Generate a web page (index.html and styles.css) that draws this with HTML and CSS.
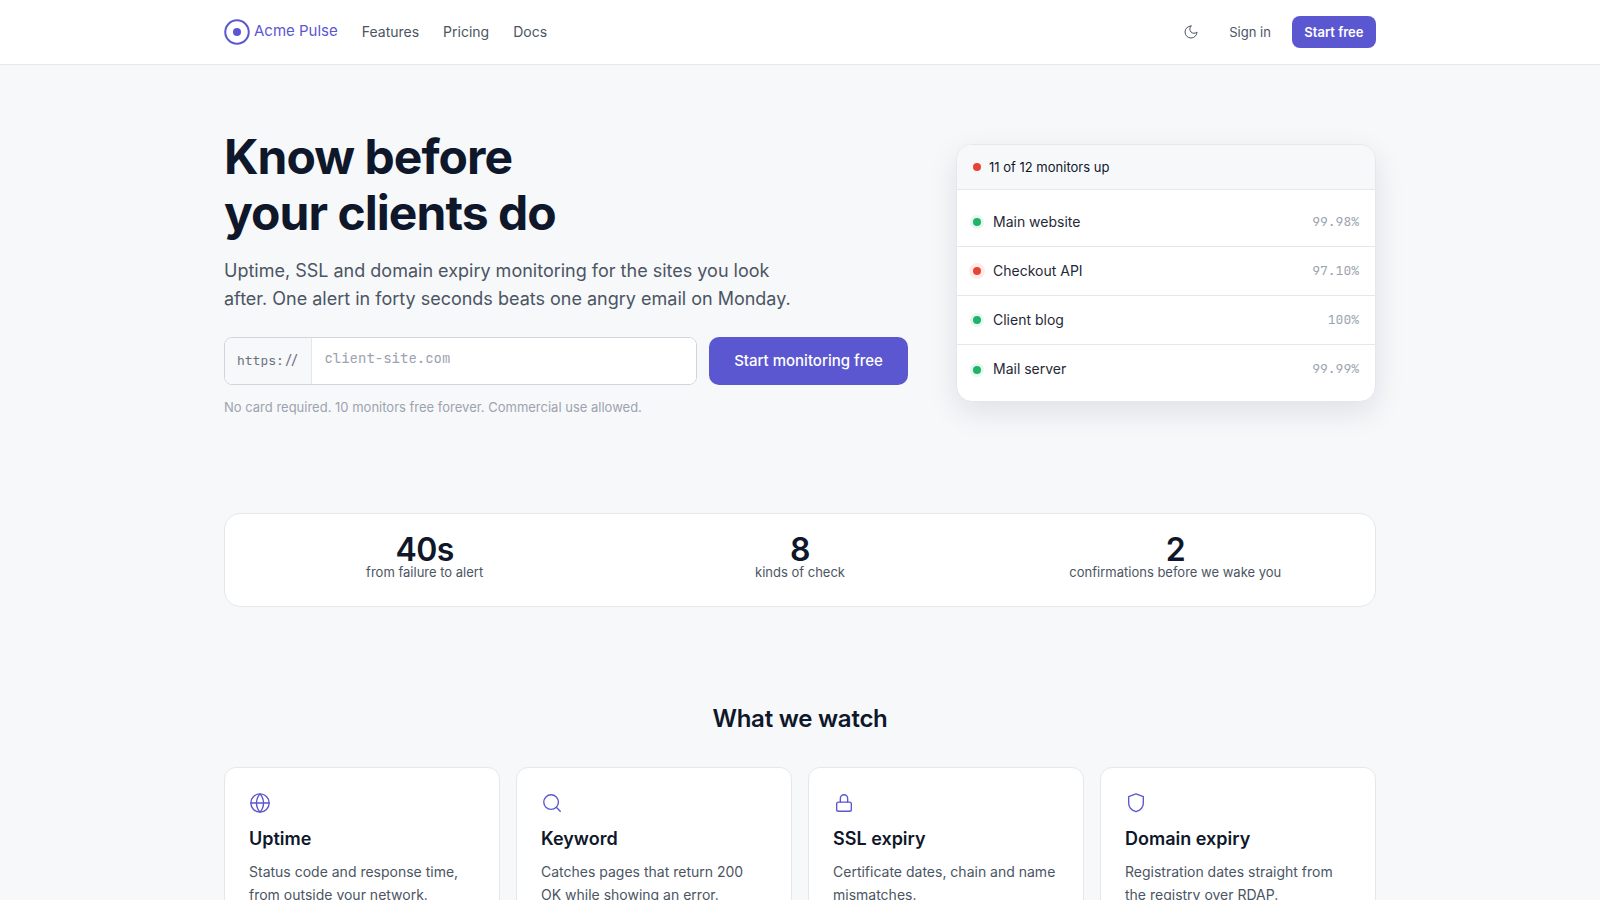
FILE: index.html
```html
<!DOCTYPE html>
<html>
<head>
<meta name="viewport" content="width=device-width, initial-scale=1">
<title>Acme Pulse</title>
<link rel="stylesheet" href="styles.css">
</head>
<body>

<div class="header">
  <div class="wrap navbar">
    <a class="brand" href="#">
      <svg class="logo" width="26" height="26" viewBox="0 0 26 26"><circle cx="13" cy="13" r="11.75" fill="none" stroke="currentColor" stroke-width="2"/><circle cx="13" cy="13" r="4" fill="currentColor"/></svg>
      <span>Acme Pulse</span>
    </a>
    <a class="nav-link" href="#">Features</a>
    <a class="nav-link" href="#">Pricing</a>
    <a class="nav-link" href="#">Docs</a>
    <div class="nav-right">
      <svg class="moon" width="16" height="16" viewBox="0 0 24 24" fill="none" stroke="currentColor" stroke-width="1.5" stroke-linecap="round" stroke-linejoin="round"><path d="M12 3a6 6 0 0 0 9 9 9 9 0 1 1-9-9Z"/></svg>
      <a class="nav-link signin" href="#">Sign in</a>
      <a class="btn-small" href="#">Start free</a>
    </div>
  </div>
</div>

<div class="wrap hero">
  <div class="hero-left">
    <h1>Know before<br>your clients do</h1>
    <p class="lead">Uptime, SSL and domain expiry monitoring for the sites you look after. One alert in forty seconds beats one angry email on Monday.</p>
    <form class="signup">
      <div class="url-field">
        <span class="prefix">https://</span>
        <input type="text" placeholder="client-site.com">
      </div>
      <button type="button">Start monitoring free</button>
    </form>
    <p class="note">No card required. 10 monitors free forever. Commercial use allowed.</p>
  </div>

  <div class="status-card">
    <div class="status-head"><span class="dot red"></span>11 of 12 monitors up</div>
    <div class="status-list">
      <div class="status-row"><span class="dot green ring"></span><span class="name">Main website</span><span class="pct">99.98%</span></div>
      <div class="status-row"><span class="dot red ring"></span><span class="name">Checkout API</span><span class="pct">97.10%</span></div>
      <div class="status-row"><span class="dot green ring"></span><span class="name">Client blog</span><span class="pct">100%</span></div>
      <div class="status-row"><span class="dot green ring"></span><span class="name">Mail server</span><span class="pct">99.99%</span></div>
    </div>
  </div>
</div>

<div class="wrap">
  <div class="stats">
    <div class="stat"><b>40s</b><span>from failure to alert</span></div>
    <div class="stat"><b>8</b><span>kinds of check</span></div>
    <div class="stat"><b>2</b><span>confirmations before we wake you</span></div>
  </div>
</div>

<div class="wrap watch">
  <h2>What we watch</h2>
  <div class="cards">
    <div class="card">
      <svg class="icon" width="22" height="22" viewBox="0 0 24 24" fill="none" stroke="currentColor" stroke-width="1.5" stroke-linecap="round" stroke-linejoin="round"><circle cx="12" cy="12" r="10"/><path d="M2 12h20"/><path d="M12 2a15 15 0 0 1 0 20 15 15 0 0 1 0-20Z"/></svg>
      <h3>Uptime</h3>
      <p>Status code and response time, from outside your network.</p>
    </div>
    <div class="card">
      <svg class="icon" width="22" height="22" viewBox="0 0 24 24" fill="none" stroke="currentColor" stroke-width="1.5" stroke-linecap="round" stroke-linejoin="round"><circle cx="11" cy="11" r="8"/><path d="m21 21-4.300-4.300"/></svg>
      <h3>Keyword</h3>
      <p>Catches pages that return 200 OK while showing an error.</p>
    </div>
    <div class="card">
      <svg class="icon" width="22" height="22" viewBox="0 0 24 24" fill="none" stroke="currentColor" stroke-width="1.5" stroke-linecap="round" stroke-linejoin="round"><rect x="4" y="11" width="16" height="10" rx="2"/><path d="M8 11V7a4 4 0 0 1 8 0v4"/></svg>
      <h3>SSL expiry</h3>
      <p>Certificate dates, chain and name mismatches.</p>
    </div>
    <div class="card">
      <svg class="icon" width="22" height="22" viewBox="0 0 24 24" fill="none" stroke="currentColor" stroke-width="1.5" stroke-linecap="round" stroke-linejoin="round"><path d="M12 2 20 5v7c0 5-3.500 8-8 9.500-4.500-1.500-8-4.500-8-9.500V5Z"/></svg>
      <h3>Domain expiry</h3>
      <p>Registration dates straight from the registry over RDAP.</p>
    </div>
  </div>
</div>

</body>
</html>
```

FILE: styles.css
```css
* {
  box-sizing: border-box;
}

body {
  margin: 0;
  background: #f7f8fa;
  color: #0f172a;
  font-family: Inter, "Noto Sans", sans-serif;
}

a {
  text-decoration: none;
}

.wrap {
  width: 1152px;
  margin: 0 auto;
}

/* Navigation bar */
.header {
  background: #fff;
  border-bottom: 1px solid #e5e7eb;
}

.navbar {
  height: 64px;
  display: flex;
  align-items: center;
  gap: 24px;
}

.brand {
  display: flex;
  align-items: center;
  gap: 4px;
  color: #5b57d1;
  font-size: 15px;
}

.brand span {
  margin-top: -3px;
}

.logo {
  display: block;
}

.nav-link {
  color: #4b5563;
  font-size: 14px;
  padding-bottom: 2px;
}

.signin {
  font-size: 13px;
  padding-bottom: 0;
}

.nav-right {
  margin-left: auto;
  display: flex;
  align-items: center;
  gap: 21px;
}

.moon {
  color: #4b5563;
  margin-right: 9px;
}

.btn-small {
  background: #5b57d1;
  color: #fff;
  font-size: 13px;
  font-weight: 600;
  padding: 8px 12.500px;
  border-radius: 8px;
  line-height: 16px;
}

/* Hero */
.hero {
  display: grid;
  grid-template-columns: 684px 420px;
  gap: 48px;
  padding-top: 64px;
  height: 448px;
}

h1 {
  margin: 0;
  font-size: 48px;
  line-height: 56px;
  font-weight: 700;
  letter-spacing: -0.96px;
}

.lead {
  margin: 16px 0 0;
  width: 580px;
  font-size: 18px;
  line-height: 28px;
  color: #4b5563;
}

.signup {
  display: flex;
  gap: 12px;
  margin-top: 24px;
}

.url-field {
  flex: 1;
  display: flex;
  height: 48px;
  background: #fff;
  border: 1px solid #d1d5db;
  border-radius: 8px;
  overflow: hidden;
}

.prefix {
  display: flex;
  align-items: center;
  padding: 0 12px 2px;
  background: #f7f8fa;
  border-right: 1px solid #e5e7eb;
  color: #6b7280;
  font-family: "JetBrains Mono", "Liberation Mono", monospace;
  font-size: 13px;
}

.url-field input {
  flex: 1;
  min-width: 0;
  border: none;
  outline: none;
  padding: 0 12px 6px;
  font-family: "JetBrains Mono", "Liberation Mono", monospace;
  font-size: 14px;
}

.url-field input::placeholder {
  color: #9ca3af;
}

.signup button {
  width: 199px;
  height: 48px;
  padding: 0 0 2px;
  border: none;
  border-radius: 10px;
  background: #5b57d1;
  color: #fff;
  font-family: inherit;
  font-size: 15px;
  font-weight: 500;
}

.note {
  margin: 14px 0 0;
  font-size: 13px;
  line-height: 16px;
  color: #9ca3af;
}

/* Status card */
.status-card {
  align-self: start;
  margin-top: 15px;
  background: #fff;
  border: 1px solid #e5e7eb;
  border-radius: 16px;
  box-shadow: 0 10px 30px rgba(17, 24, 39, 0.1);
  overflow: hidden;
}

.status-head {
  display: flex;
  align-items: center;
  gap: 8px;
  height: 45px;
  padding: 0 16px;
  background: #f7f8fa;
  border-bottom: 1px solid #e5e7eb;
  font-size: 13px;
}

.status-list {
  padding: 8px 0 7px;
}

.status-row {
  display: flex;
  align-items: center;
  height: 49px;
  padding: 0 16px 2px;
  border-bottom: 1px solid #e5e7eb;
  font-size: 14px;
}

.status-row:last-child {
  border-bottom: none;
}

.status-row .dot {
  margin-top: 2px;
}

.name {
  margin-left: 12px;
  color: #1f2937;
}

.pct {
  margin-left: auto;
  font-family: "JetBrains Mono", "Liberation Mono", monospace;
  font-size: 13px;
  color: #9ca3af;
}

.dot {
  width: 8px;
  height: 8px;
  border-radius: 50%;
  flex: none;
}

.dot.red {
  background: #ea4335;
}

.dot.green {
  background: #1fb26b;
}

.dot.ring.green {
  box-shadow: 0 0 0 3px #e6f7ef;
}

.dot.ring.red {
  box-shadow: 0 0 0 4px #fdecea;
}

/* Stats strip */
.stats {
  display: grid;
  grid-template-columns: repeat(3, 1fr);
  gap: 24px;
  height: 94px;
  padding: 22px 24px 0;
  background: #fff;
  border: 1px solid #e5e7eb;
  border-radius: 16px;
}

.stat {
  display: flex;
  flex-direction: column;
  align-items: center;
}

.stat b {
  font-size: 32px;
  line-height: 28px;
  font-weight: 600;
  letter-spacing: -0.64px;
}

.stat span {
  font-size: 13px;
  line-height: 16px;
  color: #4b5563;
}

/* What we watch */
.watch {
  padding-top: 96px;
}

h2 {
  margin: 0;
  text-align: center;
  font-size: 24px;
  line-height: 32px;
  font-weight: 600;
  letter-spacing: -0.24px;
}

.cards {
  display: grid;
  grid-template-columns: repeat(4, 1fr);
  gap: 16px;
  margin-top: 32px;
}

.card {
  height: 160px;
  padding: 24px;
  background: #fff;
  border: 1px solid #e5e7eb;
  border-radius: 12px;
}

.icon {
  display: block;
  color: #5b57d1;
}

h3 {
  margin: 12px 0 0;
  font-size: 18px;
  line-height: 26px;
  font-weight: 600;
}

.card p {
  margin: 8px 0 0;
  font-size: 14px;
  line-height: 1.65;
  color: #4b5563;
}
```
